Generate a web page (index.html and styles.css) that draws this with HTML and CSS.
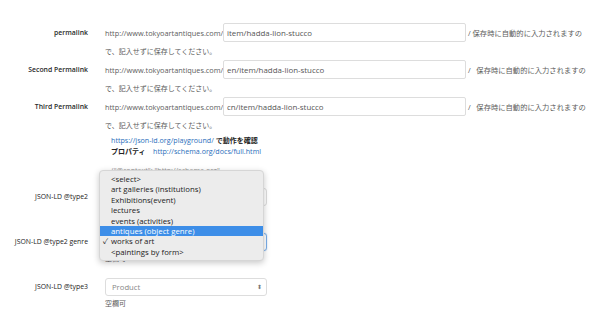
FILE: index.html
```html
<!DOCTYPE html>
<html lang="ja">
<head>
  <meta charset="UTF-8">
  <title>Permalink settings</title>
  <link rel="stylesheet" href="styles.css">
</head>
<body>
  <div class="form">
    <div class="row">
      <label class="lbl">permalink</label>
      <div class="cell">
        <div class="line">
          <span class="prefix">http://www.tokyoartantiques.com/</span>
          <input class="txt" type="text" value="item/hadda-lion-stucco">
          <span class="suffix">/ 保存時に自動的に入力されますの</span>
        </div>
        <div class="note">で、記入せずに保存してください。</div>
      </div>
    </div>
    <div class="row">
      <label class="lbl">Second Permalink</label>
      <div class="cell">
        <div class="line">
          <span class="prefix">http://www.tokyoartantiques.com/</span>
          <input class="txt" type="text" value="en/item/hadda-lion-stucco">
          <span class="suffix">/&nbsp;&nbsp; 保存時に自動的に入力されますの</span>
        </div>
        <div class="note">で、記入せずに保存してください。</div>
      </div>
    </div>
    <div class="row">
      <label class="lbl">Third Permalink</label>
      <div class="cell">
        <div class="line">
          <span class="prefix">http://www.tokyoartantiques.com/</span>
          <input class="txt" type="text" value="cn/item/hadda-lion-stucco">
          <span class="suffix">/&nbsp;&nbsp; 保存時に自動的に入力されますの</span>
        </div>
        <div class="note">で、記入せずに保存してください。</div>
      </div>
    </div>

    <div class="links">
      <div><a href="#">https://json-ld.org/playground/</a> <b>で動作を確認</b></div>
      <div><b>プロパティ</b>&nbsp;&nbsp;&nbsp; <a href="#">http://schema.org/docs/full.html</a></div>
      <div class="code">{"@context": "http://schema.org"</div>
    </div>

    <div class="selects">
      <div class="row srow">
        <label class="lbl">JSON-LD @type2</label>
        <div class="cell">
          <div class="sel"><span></span><i>&#x2B0D;</i></div>
          <div class="note">空欄可</div>
        </div>
      </div>
      <div class="row srow">
        <label class="lbl">JSON-LD @type2 genre</label>
        <div class="cell">
          <div class="sel focus"><span></span><i>&#x2B0D;</i></div>
          <div class="note">空欄可</div>
        </div>
      </div>
      <div class="row srow">
        <label class="lbl">JSON-LD @type3</label>
        <div class="cell">
          <div class="sel"><span class="ph">Product</span><i>&#x2B0D;</i></div>
          <div class="note">空欄可</div>
        </div>
      </div>

      <ul class="popup">
        <li>&lt;select&gt;</li>
        <li>art galleries (institutions)</li>
        <li>Exhibitions(event)</li>
        <li>lectures</li>
        <li>events (activities)</li>
        <li class="hl">antiques (object genre)</li>
        <li class="chk">works of art</li>
        <li>&lt;paintings by form&gt;</li>
      </ul>
    </div>
  </div>
</body>
</html>
```

FILE: styles.css
```css
body { margin: 0; background: #fff; font-family: "Open Sans", "Noto Sans CJK JP", sans-serif; color: #666; }
.form { padding-top: 23px; }
.row { display: grid; grid-template-columns: 88px 1fr; column-gap: 17px; margin-bottom: 2px; }
.lbl { text-align: right; font-size: 6.9px; font-weight: 600; color: #2a2a2a; line-height: 19px; white-space: nowrap; }
.line { display: flex; align-items: center; height: 19px; }
.prefix { font-size: 7.35px; color: #5c5c5c; width: 118px; white-space: nowrap; }
.txt {
  box-sizing: border-box;
  width: 243px;
  height: 19px;
  margin: 0;
  padding: 0 3px;
  border: 1px solid #ddd;
  border-radius: 2px;
  font-family: "Open Sans", sans-serif;
  font-size: 7.9px;
  color: #555;
}
.suffix { font-size: 7.3px; color: #5c5c5c; margin-left: 2px; white-space: nowrap; }
.note { font-size: 7px; line-height: 13px; padding-top: 3px; color: #5c5c5c; }

.links { padding: 1px 0 0 111px; font-size: 7.15px; line-height: 10px; }
.links a { color: #2a6ebb; text-decoration: none; }
.links b { color: #222; font-weight: 600; font-size: 7px; }
.code { margin-top: 8px; color: #999; }

.selects { position: relative; margin-top: 13px; }
.srow { margin-bottom: 12px; }
.srow .lbl { line-height: 18px; font-weight: 400; color: #222; }
.sel {
  box-sizing: border-box;
  width: 162px;
  height: 18px;
  border: 1px solid #ddd;
  border-radius: 3px;
  display: flex;
  align-items: center;
  justify-content: space-between;
  padding: 0 4px 0 6px;
  font-size: 7.7px;
  color: #333;
}
.sel i { font-style: normal; font-size: 6px; color: #777; }
.sel .ph { color: #888; }
.sel.focus { border-color: #7aaee8; box-shadow: 0 0 1px #7aaee8; }
.srow .note { line-height: 15px; padding-top: 0; }

.popup {
  position: absolute;
  left: 99px;
  top: -18px;
  width: 163px;
  margin: 0;
  padding: 3px 0;
  list-style: none;
  background: #ececec;
  border: 1px solid #d6d6d6;
  border-radius: 4px;
  box-shadow: 0 2px 6px rgba(0, 0, 0, 0.22);
  font-size: 7.8px;
  color: #222;
}
.popup li { height: 10.4px; line-height: 10.4px; padding-left: 11px; white-space: nowrap; }
.popup li.hl { background: #3d8ee8; color: #fff; }
.popup li.chk { position: relative; }
.popup li.chk::before { content: "\2713"; position: absolute; left: 3px; font-size: 7.5px; }
```
